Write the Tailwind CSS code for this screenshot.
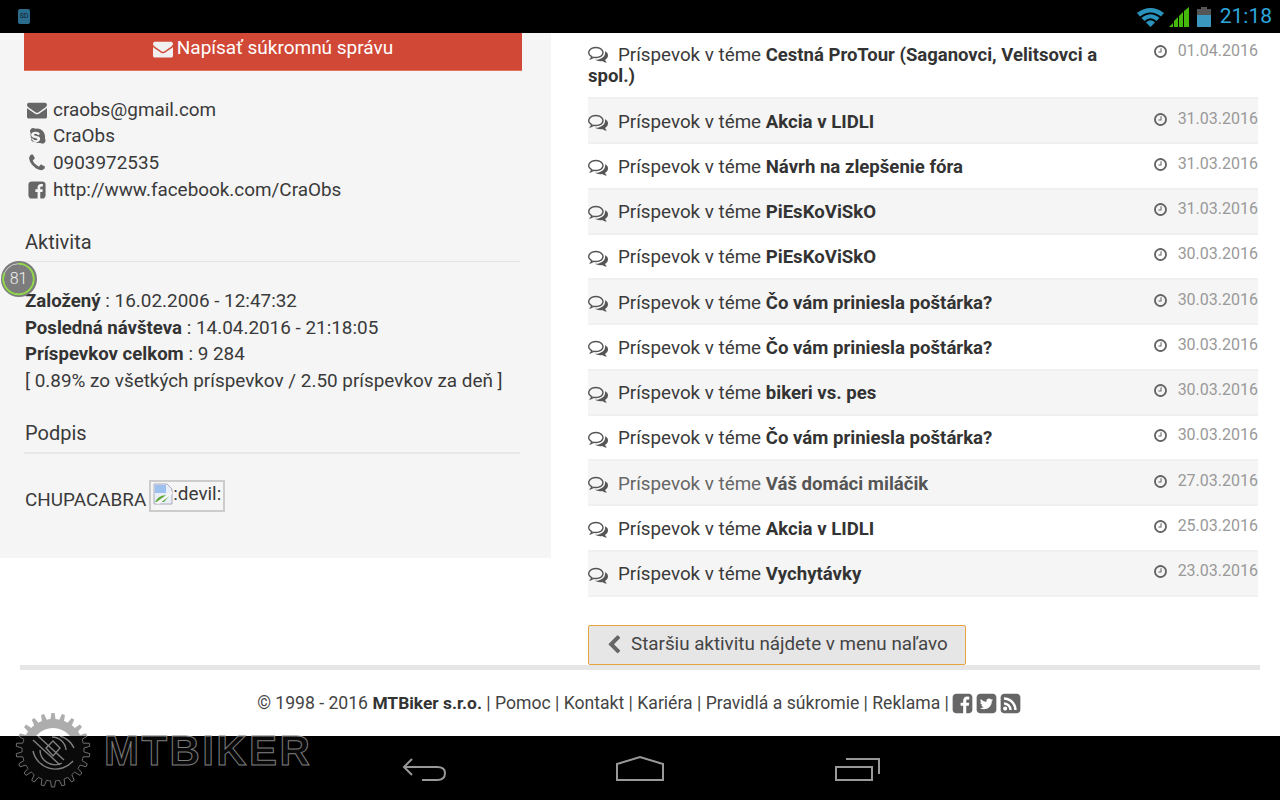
<!DOCTYPE html>
<html><head><meta charset="utf-8"><script src="https://cdn.jsdelivr.net/npm/@tailwindcss/browser@4"></script></head>
<body class="m-0 bg-white">
<svg class="hidden" xmlns="http://www.w3.org/2000/svg">
  <symbol id="i-env" viewBox="0 0 1792 1792"><path d="M1792 710v794q0 66-47 113t-113 47h-1472q-66 0-113-47t-47-113v-794q44 49 101 87 362 246 497 345 57 42 92.5 65.5t94.5 48 110 24.5h2q51 0 110-24.5t94.5-48 92.5-65.5q170-123 498-345 57-39 100-87zm0-294q0 79-49 151t-122 123q-376 261-468 325-10 7-42.5 30.5t-54 38-52 32.5-57.5 27-50 9h-2q-23 0-50-9t-57.5-27-52-32.5-54-38-42.5-30.5q-91-64-262-182.5t-205-142.5q-62-42-117-115.5t-55-136.5q0-78 41.5-130t118.5-52h1472q65 0 112.5 47t47.5 113z"/></symbol>
  <symbol id="i-sky" viewBox="0 0 1792 1792"><path d="M1173 1063q0-50-19.5-91.5t-48.5-68.5-73-49-82.5-34-87.5-23l-104-24q-30-7-44-10.5t-35-11.5-30-16-16.5-21-7.5-30q0-77 144-77 43 0 77 12t54 28.5 38 33.5 40 29 48 12q47 0 75.5-32t28.5-77q0-55-56-99.5t-142-67.5-182-23q-68 0-132 15.5t-119.5 47-89 87-33.5 128.5q0 61 19 106.5t56 75.5 80 48.5 103 32.5l146 36q90 22 112 36 32 20 32 60 0 39-40 64.5t-105 25.5q-51 0-91.5-16t-65-38.5-45.5-45-46-38.5-54-16q-50 0-75.5 30t-25.5 75q0 92 122 157.5t291 65.5q73 0 140-18.5t122.5-53.5 88.5-93.5 33-131.5zm491 135q0 119-84.5 203.5t-203.5 84.5q-97 0-175-60-73 16-143 16-203 0-374-100.5t-271-271.5-100-374q0-73 16-143-60-78-60-175 0-119 84.5-203.5t203.5-84.5q97 0 175 60 73-16 143-16 203 0 374 100.5t271 271.5 100 374q0 73-16 143 60 78 60 175z"/></symbol>
  <symbol id="i-pho" viewBox="0 0 1792 1792"><path d="M1600 1240q0 27-10 70.5t-21 68.5q-21 50-122 106-94 51-186 51-27 0-53-3.5t-57.5-12.5-47-14.5-55.5-20.5-49-18q-98-35-175-83-127-79-264-216t-216-264q-48-77-83-175-3-9-18-49t-20.5-55.5-14.5-47-12.5-57.5-3.5-53q0-92 51-186 56-101 106-122 25-11 68.5-21t70.5-10q14 0 21 3 18 6 53 76 11 19 30 54t35 63.5 31 53.5q3 4 17.5 25t21.5 35.5 7 28.5q0 20-28.5 50t-62 55-62 53-28.5 46q0 9 5 22.5t8.5 20.5 14 24 11.5 19q76 137 174 235t235 174q2 1 19 11.5t24 14 20.5 8.5 22.5 5q18 0 46-28.5t53-62 55-62 50-28.5q14 0 28.5 7t35.5 21.5 25 17.5q25 15 53.5 31t63.5 35 54 30q70 35 76 53 3 7 3 21z"/></symbol>
  <symbol id="i-fb" viewBox="0 0 1792 1792"><path d="M1376 128q119 0 203.5 84.5t84.5 203.5v960q0 119-84.5 203.5t-203.5 84.5h-188v-595h199l30-232h-229v-148q0-56 23.5-84t91.5-28l122-1v-207q-63-9-178-9-136 0-217.5 80t-81.5 226v171h-200v232h200v595h-532q-119 0-203.5-84.5t-84.5-203.5v-960q0-119 84.5-203.5t203.5-84.5h960z"/></symbol>
  <symbol id="i-tw" viewBox="0 0 1792 1792"><path d="M1408 610q-56 25-121 34 68-40 93-117-65 38-134 51-61-66-153-66-87 0-148.5 61.5t-61.5 148.5q0 29 5 48-129-7-242-65t-192-155q-29 50-29 106 0 114 91 175-47-1-100-26v2q0 75 50 133.5t123 72.5q-29 8-51 8-13 0-39-4 21 63 74.5 104t121.5 42q-116 90-261 90-26 0-50-3 148 94 322 94 112 0 210-35.5t168-95 120.5-137 75-162 24.5-168.5q0-18-1-27 63-45 105-109zm256-194v960q0 119-84.5 203.5t-203.5 84.5h-960q-119 0-203.5-84.5t-84.5-203.5v-960q0-119 84.5-203.5t203.5-84.5h960q119 0 203.5 84.5t84.5 203.5z"/></symbol>
  <symbol id="i-rss" viewBox="0 0 1792 1792"><path d="M640 1280q0-66-47-113t-113-47-113 47-47 113 47 113 113 47 113-47 47-113zm351 94q-13-232-177-396t-396-177q-14-1-24 9t-10 23v128q0 13 8.5 22t21.5 10q154 11 264 121t121 264q1 13 10 21.5t22 8.5h128q13 0 23-10t9-24zm384 1q-5-154-56-297.5t-139.5-260-205-205-260-139.5-297.5-56q-14-1-23 9-10 10-10 23v128q0 13 9 22t22 10q204 7 378 111.5t278.5 278.5 111.5 378q1 13 10 22t22 9h128q13 0 23-10 11-9 9-23zm289-959v960q0 119-84.5 203.5t-203.5 84.5h-960q-119 0-203.5-84.5t-84.5-203.5v-960q0-119 84.5-203.5t203.5-84.5h960q119 0 203.5 84.5t84.5 203.5z"/></symbol>
  <symbol id="i-clk" viewBox="0 0 1792 1792"><path d="M1024 544v448q0 14-9 23t-23 9h-320q-14 0-23-9t-9-23v-64q0-14 9-23t23-9h224v-352q0-14 9-23t23-9h64q14 0 23 9t9 23zm416 352q0-148-73-273t-198-198-273-73-273 73-198 198-73 273 73 273 198 198 273 73 273-73 198-198 73-273zm224 0q0 209-103 385.5t-279.5 279.5-385.5 103-385.5-103-279.5-279.5-103-385.5 103-385.5 279.5-279.5 385.5-103 385.5 103 279.5 279.5 103 385.5z"/></symbol>
  <symbol id="i-com" viewBox="0 0 1792 1792"><path d="M704 384q-153 0-286 52t-211.5 141-78.5 191q0 82 53 158t149 132l97 56-35 84q34-20 62-39l44-31 53 10q78 14 153 14 153 0 286-52t211.5-141 78.5-191-78.5-191-211.5-141-286-52zm0-128q191 0 353.5 68.5t256.5 186.5 94 257-94 257-256.5 186.5-353.5 68.5q-86 0-176-16-124 88-278 128-36 9-86 16h-3q-11 0-20.5-8t-11.5-21q-1-3-1-6.5t.5-6.5 2-6l2.5-5 3.5-5.5 4-5 4.5-5 4-4.5q5-6 23-25t26-29.5 22.5-29 25-38.5 20.5-44q-124-72-195-177t-71-224q0-139 94-257t256.5-186.5 353.5-68.5zm822 1169q10 24 20.5 44t25 38.5 22.5 29 26 29.5 23 25q1 1 4 4.5t4.5 5 4 5 3.5 5.5l2.5 5 2 6 .5 6.5-1 6.5q-3 14-13 22t-22 7q-50-7-86-16-154-40-278-128-90 16-176 16-271 0-472-132 58 4 88 4 161 0 309-45t264-129q125-92 192-212t67-254q0-77-23-152 129 71 204 178t75 230q0 120-71 224.5t-195 176.5z"/></symbol>
  <symbol id="i-chv" viewBox="0 0 1792 1792"><path d="M1427 301l-531 531 531 531q19 19 19 45t-19 45l-166 166q-19 19-45 19t-45-19l-742-742q-19-19-19-45t19-45l742-742q19-19 45-19t45 19l166 166q19 19 19 45z"/></symbol>
</svg>
<div class="relative flex h-[800px] w-[1280px] flex-col overflow-hidden font-['Roboto',sans-serif] text-[18.8px] leading-[26.7px] text-[#3a3a3a]">

<div class="flex h-[33px] shrink-0 items-center justify-between bg-black pl-[18px] pr-[8px]">
  <div class="flex h-[15px] w-[12px] items-center justify-center rounded-[2px] bg-[#2b6c8c] text-[7px] leading-none text-[#123]">SD</div>
  <div class="flex items-center">
    <svg class="mr-[5px]" width="27" height="20" viewBox="0 0 27 20"><path d="M0 6Q13.5 -4 27 6L24 9.5Q13.5 1.5 3 9.5Z" fill="#2a93bd"/><path d="M4.5 11Q13.5 3.5 22.5 11L19.5 14Q13.5 8.5 7.5 14Z" fill="#2a93bd"/><path d="M9 15.5Q13.5 11 18 15.5L13.5 20Z" fill="#2a93bd"/></svg>
    <svg class="mr-[7px]" width="21" height="20" viewBox="0 0 21 20"><path d="M0 20l4-4v4ZM5 20v-6l4-4v10ZM10 20V9l4-4v15ZM15 20V4l5-4v20Z" fill="#45b80c"/></svg>
    <div class="mr-[9px] flex h-[20px] w-[14px] flex-col items-center"><div class="h-[2px] w-[6px] bg-[#555]"></div><div class="h-[6px] w-[14px] bg-[#555]"></div><div class="h-[12px] w-[14px] bg-[#3a98c0]"></div></div>
    <span class="text-[21px] leading-none text-[#2ea7dc]">21:18</span>
  </div>
</div>

<div class="flex min-h-0 flex-1 flex-col">
  <div class="flex h-[632px] shrink-0 items-start">
    <div class="h-[525px] w-[551px] shrink-0 bg-[#f5f5f5] pr-[31px] pl-[24px] text-[18.9px]">
      <div class="flex h-[38px] w-[498px] items-center justify-center gap-[4px] border-b border-[#e0735c] bg-[#d14836] pb-[6px] text-[19px] text-white">
        <svg class="h-[20px] w-[20px] fill-[#f0f0f0]"><use href="#i-env"/></svg><span>Napísať súkromnú správu</span>
      </div>
      <ul class="mt-[25.7px] flex flex-col">
        <li class="flex h-[26.7px] items-center gap-[6px] pl-[3px]"><svg class="h-[20px] w-[20px] shrink-0 fill-[#666]"><use href="#i-env"/></svg><span>craobs@gmail.com</span></li>
        <li class="flex h-[26.7px] items-center gap-[6px] pl-[3px]"><svg class="h-[20px] w-[20px] shrink-0 fill-[#666]"><use href="#i-sky"/></svg><span>CraObs</span></li>
        <li class="flex h-[26.7px] items-center gap-[6px] pl-[3px]"><svg class="h-[20px] w-[20px] shrink-0 fill-[#666]"><use href="#i-pho"/></svg><span>0903972535</span></li>
        <li class="flex h-[26.7px] items-center gap-[6px] pl-[3px]"><svg class="h-[20px] w-[20px] shrink-0 fill-[#666]"><use href="#i-fb"/></svg><span>http://www.facebook.com/CraObs</span></li>
      </ul>
      <h4 class="mt-[25.3px] border-b border-[#e3e3e3] pb-[6px] pl-[1px] text-[20px] leading-[26px] font-normal">Aktivita</h4>
      <div class="mt-[26px] pl-[1px] leading-[26.8px]">
        <p><b class="text-[18.6px] font-bold text-[#333]">Založený</b> : 16.02.2006 - 12:47:32</p>
        <p><b class="text-[18.6px] font-bold text-[#333]">Posledná návšteva</b> : 14.04.2016 - 21:18:05</p>
        <p><b class="text-[18.6px] font-bold text-[#333]">Príspevkov celkom</b> : 9 284</p>
        <p>[ 0.89% zo všetkých príspevkov / 2.50 príspevkov za deň ]</p>
      </div>
      <h4 class="mt-[25px] border-b-2 border-[#e8e8e8] pb-[6px] pl-[1px] text-[20px] leading-[26px] font-normal">Podpis</h4>
      <div class="mt-[26px] flex items-start pl-[1px]">
        <span class="mt-[7px]">CHUPACABRA</span>
        <span class="ml-[3px] flex h-[32px] w-[76px] items-start border-2 border-[#ccc] pl-[1px] leading-[24px]"><svg class="mt-[1px] shrink-0" width="22" height="22" viewBox="0 0 22 22"><path d="M2 1h13l5 5v15H2Z" fill="#e9eef8" stroke="#aab"/><path d="M3 2h11v8H3Z" fill="#9dc0ee"/><path d="M3 19Q8 10 17 13L12 19Z" fill="#5aa83c"/><path d="M3 20L20 8v3L7 21Z" fill="#f5f5f5"/></svg><span class="-ml-[1px]">:devil:</span></span>
      </div>
    </div>

    <div class="ml-[37px] flex w-[670px] flex-col">
      <div class="flex h-[66px] justify-between border-b-2 border-[#f0f0f0]">
        <div class="w-[530px] pt-[10.5px] leading-[21.5px]"><svg class="mr-[10px] inline h-[20px] w-[20px] fill-[#555] align-[-3px]"><use href="#i-com"/></svg>Príspevok v téme <b class="text-[18.5px] text-[#333]">Cestná ProTour (Saganovci, Velitsovci a spol.)</b></div>
        <div class="flex h-[36px] items-center gap-[10px] text-[16px] text-[#999]"><svg class="h-[15px] w-[15px] fill-[#666]"><use href="#i-clk"/></svg>01.04.2016</div>
      </div>

      <div class="flex h-[45.25px] justify-between border-b-2 border-[#f0f0f0] bg-[#f5f5f5]"><div class="flex h-[44px] items-center pt-[2px]"><svg class="mr-[10px] h-[20px] w-[20px] fill-[#555]"><use href="#i-com"/></svg><span>Príspevok v téme <b class="text-[18.6px] text-[#333]">Akcia v LIDLI</b></span></div><div class="flex h-[40px] items-center gap-[10px] text-[16px] text-[#999]"><svg class="h-[15px] w-[15px] fill-[#666]"><use href="#i-clk"/></svg>31.03.2016</div></div>
      <div class="flex h-[45.25px] justify-between border-b-2 border-[#f0f0f0]"><div class="flex h-[44px] items-center pt-[2px]"><svg class="mr-[10px] h-[20px] w-[20px] fill-[#555]"><use href="#i-com"/></svg><span>Príspevok v téme <b class="text-[18.6px] text-[#333]">Návrh na zlepšenie fóra</b></span></div><div class="flex h-[40px] items-center gap-[10px] text-[16px] text-[#999]"><svg class="h-[15px] w-[15px] fill-[#666]"><use href="#i-clk"/></svg>31.03.2016</div></div>
      <div class="flex h-[45.25px] justify-between border-b-2 border-[#f0f0f0] bg-[#f5f5f5]"><div class="flex h-[44px] items-center pt-[2px]"><svg class="mr-[10px] h-[20px] w-[20px] fill-[#555]"><use href="#i-com"/></svg><span>Príspevok v téme <b class="text-[18.6px] text-[#333]">PiEsKoViSkO</b></span></div><div class="flex h-[40px] items-center gap-[10px] text-[16px] text-[#999]"><svg class="h-[15px] w-[15px] fill-[#666]"><use href="#i-clk"/></svg>31.03.2016</div></div>
      <div class="flex h-[45.25px] justify-between border-b-2 border-[#f0f0f0]"><div class="flex h-[44px] items-center pt-[2px]"><svg class="mr-[10px] h-[20px] w-[20px] fill-[#555]"><use href="#i-com"/></svg><span>Príspevok v téme <b class="text-[18.6px] text-[#333]">PiEsKoViSkO</b></span></div><div class="flex h-[40px] items-center gap-[10px] text-[16px] text-[#999]"><svg class="h-[15px] w-[15px] fill-[#666]"><use href="#i-clk"/></svg>30.03.2016</div></div>
      <div class="flex h-[45.25px] justify-between border-b-2 border-[#f0f0f0] bg-[#f5f5f5]"><div class="flex h-[44px] items-center pt-[2px]"><svg class="mr-[10px] h-[20px] w-[20px] fill-[#555]"><use href="#i-com"/></svg><span>Príspevok v téme <b class="text-[18.6px] text-[#333]">Čo vám priniesla poštárka?</b></span></div><div class="flex h-[40px] items-center gap-[10px] text-[16px] text-[#999]"><svg class="h-[15px] w-[15px] fill-[#666]"><use href="#i-clk"/></svg>30.03.2016</div></div>
      <div class="flex h-[45.25px] justify-between border-b-2 border-[#f0f0f0]"><div class="flex h-[44px] items-center pt-[2px]"><svg class="mr-[10px] h-[20px] w-[20px] fill-[#555]"><use href="#i-com"/></svg><span>Príspevok v téme <b class="text-[18.6px] text-[#333]">Čo vám priniesla poštárka?</b></span></div><div class="flex h-[40px] items-center gap-[10px] text-[16px] text-[#999]"><svg class="h-[15px] w-[15px] fill-[#666]"><use href="#i-clk"/></svg>30.03.2016</div></div>
      <div class="flex h-[45.25px] justify-between border-b-2 border-[#f0f0f0] bg-[#f5f5f5]"><div class="flex h-[44px] items-center pt-[2px]"><svg class="mr-[10px] h-[20px] w-[20px] fill-[#555]"><use href="#i-com"/></svg><span>Príspevok v téme <b class="text-[18.6px] text-[#333]">bikeri vs. pes</b></span></div><div class="flex h-[40px] items-center gap-[10px] text-[16px] text-[#999]"><svg class="h-[15px] w-[15px] fill-[#666]"><use href="#i-clk"/></svg>30.03.2016</div></div>
      <div class="flex h-[45.25px] justify-between border-b-2 border-[#f0f0f0]"><div class="flex h-[44px] items-center pt-[2px]"><svg class="mr-[10px] h-[20px] w-[20px] fill-[#555]"><use href="#i-com"/></svg><span>Príspevok v téme <b class="text-[18.6px] text-[#333]">Čo vám priniesla poštárka?</b></span></div><div class="flex h-[40px] items-center gap-[10px] text-[16px] text-[#999]"><svg class="h-[15px] w-[15px] fill-[#666]"><use href="#i-clk"/></svg>30.03.2016</div></div>
      <div class="flex h-[45.25px] justify-between border-b-2 border-[#f0f0f0] bg-[#f5f5f5] text-[#666]"><div class="flex h-[44px] items-center pt-[2px]"><svg class="mr-[10px] h-[20px] w-[20px] fill-[#555]"><use href="#i-com"/></svg><span>Príspevok v téme <b class="text-[18.6px] text-[#555]">Váš domáci miláčik</b></span></div><div class="flex h-[40px] items-center gap-[10px] text-[16px] text-[#999]"><svg class="h-[15px] w-[15px] fill-[#666]"><use href="#i-clk"/></svg>27.03.2016</div></div>
      <div class="flex h-[45.25px] justify-between border-b-2 border-[#f0f0f0]"><div class="flex h-[44px] items-center pt-[2px]"><svg class="mr-[10px] h-[20px] w-[20px] fill-[#555]"><use href="#i-com"/></svg><span>Príspevok v téme <b class="text-[18.6px] text-[#333]">Akcia v LIDLI</b></span></div><div class="flex h-[40px] items-center gap-[10px] text-[16px] text-[#999]"><svg class="h-[15px] w-[15px] fill-[#666]"><use href="#i-clk"/></svg>25.03.2016</div></div>
      <div class="flex h-[45.25px] justify-between border-b-2 border-[#f0f0f0] bg-[#f5f5f5]"><div class="flex h-[44px] items-center pt-[2px]"><svg class="mr-[10px] h-[20px] w-[20px] fill-[#555]"><use href="#i-com"/></svg><span>Príspevok v téme <b class="text-[18.6px] text-[#333]">Vychytávky</b></span></div><div class="flex h-[40px] items-center gap-[10px] text-[16px] text-[#999]"><svg class="h-[15px] w-[15px] fill-[#666]"><use href="#i-clk"/></svg>23.03.2016</div></div>

      <div class="mt-[28px] flex h-[40px] w-[378px] items-center gap-[7px] rounded-[2px] border-[1.5px] border-[#e8a33d] bg-[#e6e6e6] pl-[15px] text-[#444]"><svg class="h-[20px] w-[20px] fill-[#666]"><use href="#i-chv"/></svg><span>Staršiu aktivitu nájdete v menu naľavo</span></div>
    </div>
  </div>

  <footer class="mx-[20px] flex h-[71px] shrink-0 items-center justify-center border-t-[5px] border-[#e6e6e6] text-[17.6px] text-[#444]">
    <span>© 1998 - 2016 <b class="text-[17.4px] text-[#333]">MTBiker s.r.o.</b> | Pomoc | Kontakt | Kariéra | Pravidlá a súkromie | Reklama |</span>
    <span class="ml-[2px] flex"><svg class="mx-[0.5px] h-[23px] w-[23px] fill-[#666]"><use href="#i-fb"/></svg><svg class="mx-[0.5px] h-[23px] w-[23px] fill-[#666]"><use href="#i-tw"/></svg><svg class="mx-[0.5px] h-[23px] w-[23px] fill-[#666]"><use href="#i-rss"/></svg></span>
  </footer>
</div>

<nav class="flex h-[64px] shrink-0 items-center justify-center bg-black">
  <svg width="520" height="64" viewBox="380 736 520 64" fill="none" stroke="#999" stroke-width="2"><path d="M412 759L404 767L412 775M404 767H437Q445 767 445 773Q445 780 437 780H422"/><path d="M617 780V764L640 757L663 764V780Z"/><path d="M836 767H872V780H836Z"/><path d="M846 759H879V774"/></svg>
</nav>

<div class="absolute top-[708px] left-[10px] flex items-start">
  <svg width="84" height="84" viewBox="10 708 84 84">
    <defs><clipPath id="up"><rect x="0" y="700" width="100" height="36"/></clipPath><clipPath id="dn"><rect x="0" y="736" width="100" height="64"/></clipPath></defs>
    <g clip-path="url(#up)"><path class="gear" fill="#adadad"/><circle cx="53" cy="750" r="22" fill="#fff"/></g>
    <g clip-path="url(#dn)"><path class="gear" fill="#0a0a0a" stroke="#6e6e6e" stroke-width="1"/></g>
    <g clip-path="url(#dn)" fill="none" stroke="#808080" stroke-width="1.4"><path d="M33 751A23 23 0 0 0 73 761"/><path d="M40 750A15 15 0 0 0 62 763"/><path d="M33 740L60 765"/><path d="M38 736L64 760"/><path d="M74 748A23 23 0 0 0 60 736"/><path d="M66 750A14 14 0 0 0 52 737"/><path d="M46 748L53 741L60 748L53 756Z"/></g>
  </svg>
  <span class="mt-[22px] ml-[10px] font-['Liberation_Sans',sans-serif] text-[42px] leading-[42px] font-bold tracking-[2.4px] text-[#0a0a0a] opacity-[0.99] [-webkit-text-stroke:1px_#808080]">MTBIKER</span>
</div>

<div class="absolute top-[261px] left-[1px] flex h-[36px] w-[36px] items-center justify-center rounded-full bg-[#7c7c7c] text-[16px] leading-none font-light text-[#f0f0f0]">
  <svg class="absolute top-0 left-0" width="36" height="36" viewBox="0 0 36 36"><circle cx="17.5" cy="18" r="15.3" fill="none" stroke="#cfcfcf" stroke-width="1"/><circle cx="17.5" cy="18" r="15.3" fill="none" stroke="#8fdc42" stroke-width="1.8" stroke-dasharray="78 96" transform="rotate(-90 17.5 18)"/></svg>
  <span class="-ml-[1px]">81</span>
</div>
</div>
<script>
var d='',n=22,c=[53,750];
for(var i=0;i<n;i++){var a=i/n*Math.PI*2;
 [[-0.5,31],[-0.28,31],[-0.15,37],[0.15,37],[0.28,31]].forEach(function(p,j){var t=a+p[0]*Math.PI*2/n;d+=(i==0&&j==0?'M':'L')+(c[0]+p[1]*Math.sin(t)).toFixed(1)+' '+(c[1]-p[1]*Math.cos(t)).toFixed(1)});}
d+='Z';document.querySelectorAll('.gear').forEach(function(e){e.setAttribute('d',d)});
</script>
</body></html>
